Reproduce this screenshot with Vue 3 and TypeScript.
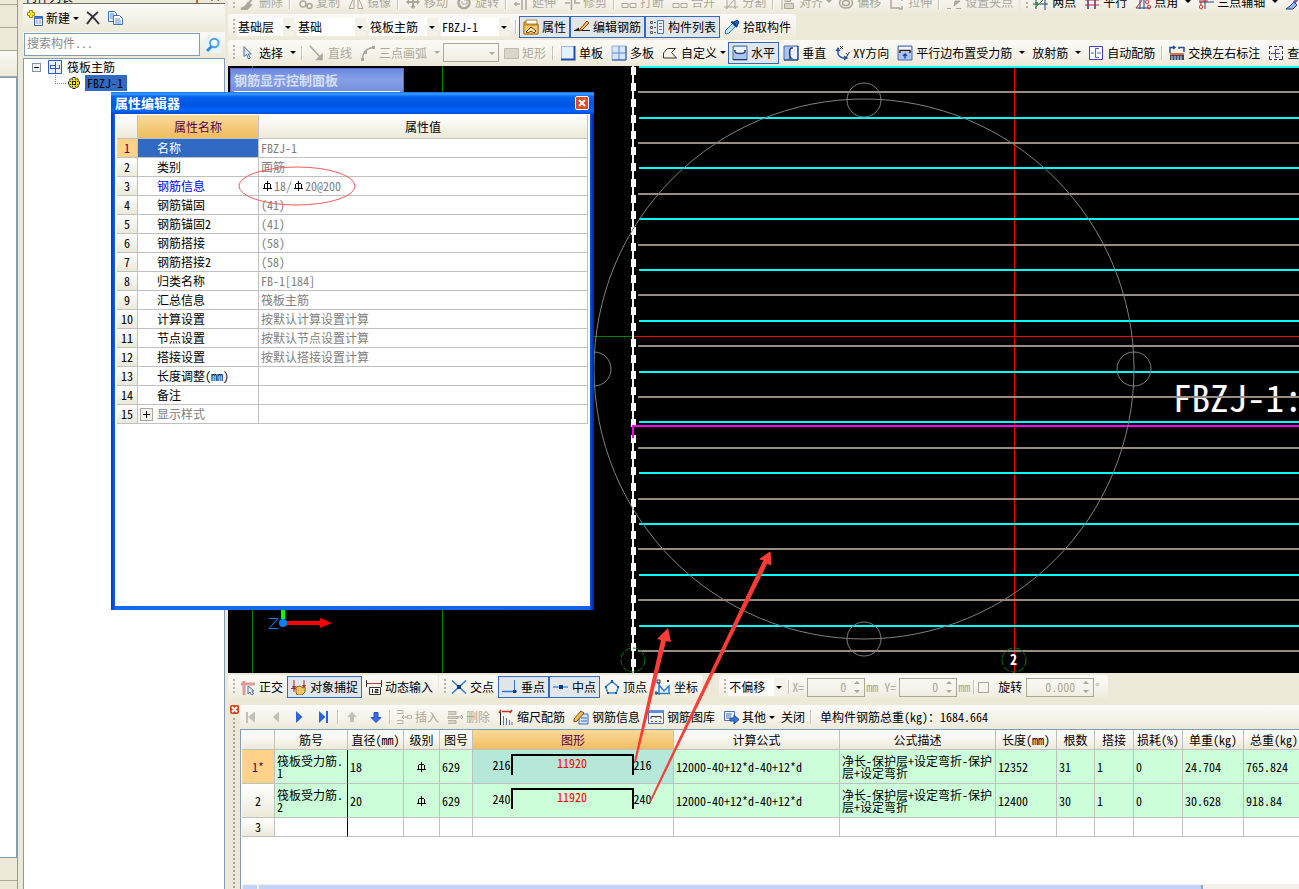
<script setup lang="ts">
import { h, ref } from 'vue'

type Shape = [d: string, fill?: string, stroke?: string, width?: number]
interface Tool {
  icon?: string
  label?: string
  title?: string
  drop?: 'near' | 'far'
  on?: boolean
  off?: boolean
  sep?: boolean
}

const G = '#aca899'
const B = '#2b56b8'
const icons: Record<string, Shape[]> = {
  newItem: [
    ['M2.5 0.5h3v2h2v3h-2v2h-3v-2h-2v-3h2z', '#ffe13a', '#a88a00'],
    ['M7.5 6.5h8v9h-8z', '#eef4ff', '#3a62b0'],
    ['M8 7h7v2h-7z', '#4a7ad0'],
    ['M9 11h2M12 11h2M9 13h2M12 13h2', 'none', '#6a8cd0'],
  ],
  cross: [['M2 2C5 4 10 9 14 14M13 2C9 5 5 9 2 14', 'none', '#33333b', 2]],
  copyDoc: [
    ['M1.5 1.5h6l2 2v8h-8z', '#e8f1ff', '#3f6fc0'],
    ['M3 4h4M3 6h4M3 8h4', 'none', '#5b8ad8'],
    ['M6.5 5.5h6l3 3v6h-9z', '#fff', '#3f6fc0'],
    ['M8 9h5M8 11h6M8 13h6', 'none', '#5b8ad8'],
  ],
  search: [
    ['M0 0h16v16H0z', '#e6f3fd'],
    ['M13.5 6a4.2 4.2 0 1 1-8.4 0a4.2 4.2 0 1 1 8.4 0z', '#f6fbff', '#4aa5e8', 2],
    ['M6.5 9.5L2 14', 'none', '#2f8fdc', 3],
  ],
  gridIcon: [
    ['M1.5 1.5h13v13h-13z', '#eaf1ff', '#2a5ac0', 1],
    ['M8.5 3v11M3.5 6v3.5M3 6.500h5M3 9.500h10M12.500 6v3.500', 'none', '#2a5ac0'],
  ],
  gear: [
    ['M8 2v12M2 8h12M4 4l8 8M12 4l-8 8', 'none', '#111', 3],
    ['M8 3v10M3 8h10M4.500 4.500l7 7M11.500 4.500l-7 7', 'none', '#ffe600', 2],
    ['M6 6h4v4H6z', '#222'],
    ['M7 7h2v2H7z', '#fff04a'],
  ],
  props: [
    ['M1 3h6l2 2h6v10H1z', '#e9a83c', '#a06a14'],
    ['M3 1h11v4H3z', '#fff', '#b08030'],
    ['M1 6h14v9H1z', '#f5c768', '#b87a1e'],
    ['M3 13l5-5 5 4-2 2-3-2-3 2z', '#fbeccb', '#5a4210'],
  ],
  editBar: [
    ['M0 11.500h16', 'none', '#222'],
    ['M0 11.500L5 8.500v3', '#222'],
    ['M6 10l7-8 2 2-7 7-3 1z', '#f2c23c', '#8a3c18'],
  ],
  list: [
    ['M1.500 2.500h2v2h-2zM1.500 7.500h2v2h-2zM1.500 12.500h2v2h-2z', 'none', '#556', 1],
    ['M5 3.500h2M5 8.500h2M5 13.500h2', 'none', '#556'],
    ['M8.500 1.500h6v13h-6z', '#eaf2ff', '#4573b8'],
    ['M10 4.500h3M10 7.500h3M10 10.500h3', 'none', '#4573b8'],
  ],
  picker: [
    ['M10 3l3-2 2 2-2 4-2-1-4-3z', '#1d62c8', '#0c3d8a'],
    ['M9 4l3 3-7 7-3 1-1-1 1-3z', '#bfe4fb', '#2c6fb0'],
    ['M8 3l5 5', 'none', '#0c3d8a', 2],
  ],
  pointer: [['M4 1.500v10l2.500-2 2 4.500 1.800-1-2-4h3z', '#dfe8f4', '#53749c']],
  line: [['M1 1l11 12M13 14.500h-5l5-5z', G, G, 1.5]],
  arc: [['M2 15C3 7 7 3 13 2.500', 'none', G, 1.5], ['M1 13h3v3H1zM12 1h3v3h-3zM4 6h3v3H4z', G]],
  rect: [['M1.500 3.500h14v10h-14z', '#d9d5c8', '#c0bcae']],
  single: [['M1.500 1.500h13v13h-13z', '#e6effc', '#9ab8e6'], ['M14.500 1v13.500H1', 'none', '#1f4fa8', 2]],
  multi: [['M1 1h14v14H1z', '#d7e5fb', '#8fb0e0'], ['M8 1v14M1 8h14', 'none', '#5f88c8', 1], ['M15 1v14H1', 'none', '#1f4fa8']],
  poly: [['M5.500 3.500h8l-4 4 5 5.500H1.500v-5z', 'none', '#333']],
  horiz: [['M1 1h14v14H1z', '#a9c4ee', '#4a6fae'], ['M2 2h12v6H2z', '#eaf3ff'], ['M3 5v2c1 2 9 2 10 0v-2', 'none', '#26406f', 1.500], ['M1 14.500h14', 'none', '#1d3c78']],
  vert: [['M1 1h14v14H1z', '#a9c4ee', '#4a6fae'], ['M8 2h6v12H8z', '#eaf3ff'], ['M10 3H8.500c-3 1-2 9-0.500 10l-2 0', 'none', '#26406f', 1.500], ['M15 1v14H1', 'none', '#1d3c78']],
  xy: [['M4 3v5c0 3 2 4 5 5h4', 'none', B, 1.500], ['M1.500 6L4 2l2.500 4zM10 10.500l4.500 2.500-4.500 2.500z', B], ['M6 1l3 3M9 1L6 4M12 8l1.500 2M15.500 7l-3 5', 'none', '#333']],
  edge: [['M1 1h14v14H1z', '#a9c4ee', '#4a6fae'], ['M2 2h12v5H2z', '#f2f7ff'], ['M3 8V5.500h10V8', 'none', '#222', 1.500], ['M8 13.500V9M6 11l2-2 2 2', 'none', '#2a3fb0', 1.500]],
  auto: [['M1.500 1.500h13v13h-13z', '#fff', '#4040c0', 1], ['M11 3.500H7.500v9H11M3 8h3M9 8h4', 'none', '#4466d0']],
  swap: [['M1 8V2.500h4M4 1l2 1.500L4 4M10 4V2.500h5M15 2v5', 'none', '#234f9a', 1.500], ['M1 9h14v6H1z', '#3a4a6a'], ['M1 8h14v2H1z', '#e0703a'], ['M3 11v4M6 11v4M9 11v4M12 11v4', 'none', '#dfe6f4']],
  view: [['M1.500 1.500h13v13h-13z', 'none', '#335', 1], ['M4 1.500h2M9 1.500h2M4 14.500h2M9 14.500h2M1.500 4v2M1.500 9v2M14.500 4v2M14.500 9v2', 'none', '#fff', 2], ['M11 4.500H7.500v8h3M3 8.500h9', 'none', '#3a56b0']],
  brush: [['M13 4l-5 6M8 9l3 2-4 4H1l4-2z', G, G, 2]],
  circles: [['M9 10a3 3 0 1 1-6 0a3 3 0 1 1 6 0zM15 12a2.500 2.500 0 1 1-5 0a2.500 2.500 0 1 1 5 0z', 'none', G, 1.500]],
  mirror: [['M6 3v11.500H1zM10 3v11.500h5z', 'none', G]],
  move: [['M8 2v12M2 8h12', 'none', G, 2], ['M5 4l3-3 3 3zM5 12l3 3 3-3zM4 5L1 8l3 3zM12 5l3 3-3 3z', G]],
  rotate: [['M12 5a5.500 5.500 0 1 1-8 0', 'none', G, 2.500], ['M8 6h3v4H6V7', 'none', G]],
  extend: [['M1 10h6M9 4v12M13 4v12M3 8v4', 'none', G, 1.500]],
  trim: [['M1 9h5M10 9h6M7.500 4v12M11 4v4', 'none', G, 1.500]],
  split: [['M1 9.500h6v4H1zM9 9.500h6v4H9z', 'none', G]],
  cut: [['M1 4h14M1 13h14M3 15L13 4M4 4v11M12 5v10', 'none', G]],
  align: [['M2 1v14.500M4.500 9.500h9v5h-9zM4.500 4.500h6v3h-6', '#d8d4c6', G]],
  offset: [['M14.500 9a6.500 5 0 1 1-13 0a6.500 5 0 1 1 13 0zM11.500 9a3.500 2.500 0 1 1-7 0a3.500 2.500 0 1 1 7 0z', 'none', G, 1.500]],
  stretch: [['M2 4v10h9M13 12v3h-3M4 5h2M8 5h2M13 5v2', 'none', G, 1.500]],
  grip: [['M1 14.500h4M10 14.500h5M9 7h5l-6 5z', G, G]],
  axis2: [['M3 1v14M12 4v12M0 10h15M2 14L12 4', 'none', '#26418c', 1], ['M2 14L12 4', 'none', '#2e9a40'], ['M2 8h3v3H2z', '#2e9a40']],
  axisP: [['M4 2v13M11 2v13', 'none', '#26418c', 1.500], ['M1 6h14M1 11h14', 'none', '#d02020']],
  axisA: [['M1 14h14M5 4v11M9 4v11', 'none', '#26418c'], ['M1 14L8 5M12 6a1.500 2 0 1 0 .1 0M14 11a1.500 2 0 1 0 .1 0', 'none', '#d02020']],
  axis3: [['M7 1v14M1 8h15', 'none', '#26418c'], ['M1 7h9M3 8v3', 'none', '#d02020'], ['M3 11a1.500 2 0 1 0 .1 0', 'none', '#d02020']],
  paint: [['M14 3l-5 6', 'none', '#8a50c0', 3], ['M9 8l3 3-4 4H1l4-3z', '#9ab6e8', '#26418c']],
  ortho: [['M4 2v14M1 5h14', 'none', '#dd9a9a', 3], ['M8 7v8l2-2 1.500 3 2-1-1.500-3h2z', '#e4ebf5', '#53749c']],
  snap: [['M3 1v12M13 1v9M0 9.500h5', 'none', '#a03030'], ['M1 7h4l-2 4zM11 6h4l-2 4z', '#a03030'], ['M5 8l4-1 3 2 2-1v5l-3 3H6l-1-3z', '#f0c460', '#8a6418']],
  dyn: [['M0.500 1v7M15.500 1v7', 'none', '#333'], ['M1 4.500h14', 'none', '#b04040'], ['M3.500 8.500h11v7h-11z', '#f7f5ee', '#333'], ['M6.500 10v4M9 10.500h3v1.500h-3v1.500h3.500', 'none', '#222']],
  cp: [['M1 1.500l14 13M15 1.500l-14 13', 'none', '#2a7ad0', 1.500], ['M6 6h4v4H6z', '#123a80']],
  pp: [['M0 12.500h15', 'none', '#2a7ad0', 1.500], ['M12.500 1v12', 'none', '#2a7ad0'], ['M11 11h3v3h-3z', '#123a80']],
  mp: [['M0 8h15', 'none', '#4a90d8', 1.500], ['M6 6h4v4H6z', '#123a80']],
  top: [['M8 2.500L14.500 8l-2.500 6H4L1.500 8z', 'none', '#3a84c8', 1.500], ['M7 1h2v3H7zM1 7h2v2H1zM13 7h2v2h-2zM3 13h2v2H3zM11 13h2v2h-2z', '#1f5aa8']],
  coord: [['M4 3v13M1 14.500h14M4 6l5 6 5-5v8', 'none', '#2a7ad0', 1.500], ['M2 1h3v3H2zM12 1l2 2M14 1l-2 2M0 13h2v2H0z', 'none', '#333']],
  first: [['M3 3v11', 'none', '#c2bfb4', 2], ['M11 2.500v11L4 8z', '#c2bfb4']],
  prev: [['M11 2.500v11L5 8z', '#c2bfb4']],
  next: [['M4 2v12L10.500 8z', '#2a62e0']],
  last: [['M3 2v12L9.500 8z', '#2a62e0'], ['M11 2v12', 'none', '#2a62e0', 2]],
  up: [['M8 3l5 5h-3v5H6V8H3z', '#c2bfb4']],
  down: [['M8 13.500l5-5h-3v-5H6v5H3z', '#3a6ae8', '#2450c0']],
  insert: [['M1 1.500h6v3H1M1 11.500h6v3H1M11.500 6.500h4v3h-4z', 'none', '#b8b4a6'], ['M11 8H6M8 6L6 8l2 2', 'none', G]],
  remove: [['M1 2.500h8v3H1M1 11.500h8v3H1M1 7.500h10v2H1z', '#d5d1c4', '#b8b4a6'], ['M10 8h6M14 6l2 2-2 2', 'none', G]],
  scale: [['M2.500 3v13', 'none', '#222', 1], ['M5.500 7v9M8.500 9v7M11.500 11v5M14 13v3', 'none', '#5577a8'], ['M4 2.500h9M3 1l-2 3M14 1l-2 3', 'none', '#c03020', 1.500]],
  info: [['M6 5h9v10H6z', '#d5e4fb', '#3f6fc0'], ['M1 10l7-8 3 2-7 8-3 1z', '#f0bf50', '#7a4a10'], ['M8 9h6M8 12h6', 'none', '#3f6fc0']],
  lib: [['M0.500 1.500h15v13H0.500z', '#f2f6fd', '#4a6fae'], ['M0 1h16v3H0z', '#5f8fd8'], ['M3 10V7.500h10V10M8 7v2', 'none', '#444'], ['M3 12.500h2M11 12.500h2', 'none', '#c03020'], ['M7 12.500h2', 'none', '#30a040']],
  other: [['M1.500 2.500h10v9h-10z', '#eef4ff', '#4a6fae'], ['M3 5h6M3 7h5M3 9h4', 'none', '#4a6fae'], ['M7 9h4V6l5 4.500-5 4.500v-3H7z', '#3a72d8', '#1f4fa8']],
}

const Ico = (p: { n: string }) =>
  h('svg', { class: 'ico', width: 16, height: 16, viewBox: '0 0 16 16', 'aria-hidden': 'true' },
    (icons[p.n] ?? []).map(([d, fill, stroke, w]) =>
      h('path', { d, fill: fill ?? 'none', stroke: stroke ?? 'none', 'stroke-width': w ?? 1 })))
Ico.props = ['n']

const ToolItems = (p: { items: Tool[] }) =>
  p.items.map((t) =>
    t.sep
      ? h('span', { class: 'sep' })
      : h('button', { type: 'button', class: ['tool', { on: t.on, off: t.off, drop: t.drop }], disabled: t.off, title: t.title }, [
          t.icon ? h(Ico, { n: t.icon }) : null,
          t.label ? h('span', t.label) : null,
          t.drop ? h('i', { class: ['tri', t.drop] }) : null,
        ]))
ToolItems.props = ['items']

const Rebar = () =>
  h('svg', { class: 'rebar', width: 11, height: 12, viewBox: '0 0 11 12', role: 'img', 'aria-label': 'HRB400' }, [
    h('path', { d: 'M5.5 1v10M3 3.5h5M2.5 4v4M8.5 4v4M1 8.5h9', fill: 'none', stroke: 'currentColor', 'stroke-width': 1, 'shape-rendering': 'crispEdges' }),
  ])

const sep: Tool = { sep: true }
const editTools: Tool[] = [
  { icon: 'brush', label: '删除', off: true }, sep,
  { icon: 'circles', label: '复制', off: true }, { icon: 'mirror', label: '镜像', off: true }, sep,
  { icon: 'move', label: '移动', off: true }, { icon: 'rotate', label: '旋转', off: true }, sep,
  { icon: 'extend', label: '延伸', off: true }, { icon: 'trim', label: '修剪', off: true }, sep,
  { icon: 'split', label: '打断', off: true }, { icon: 'split', label: '合并', off: true },
  { icon: 'cut', label: '分割', off: true }, sep,
  { icon: 'align', label: '对齐', off: true, drop: 'near' }, { icon: 'offset', label: '偏移', off: true },
  { icon: 'stretch', label: '拉伸', off: true }, sep,
  { icon: 'grip', label: '设置夹点', off: true },
]
const axisTools: Tool[] = [
  { icon: 'axis2', label: '两点' }, { icon: 'axisP', label: '平行' },
  { icon: 'axisA', label: '点角', drop: 'far' }, { icon: 'axis3', label: '三点辅轴', drop: 'far' },
  { icon: 'paint', title: '修剪轴线' },
]
const viewTools: Tool[] = [
  { icon: 'props', label: '属性', on: true }, { icon: 'editBar', label: '编辑钢筋', on: true },
  { icon: 'list', label: '构件列表', on: true }, { icon: 'picker', label: '拾取构件' },
]
const drawA: Tool[] = [
  { icon: 'pointer', label: '选择', drop: 'far' }, sep,
  { icon: 'line', label: '直线', off: true }, { icon: 'arc', label: '三点画弧', off: true, drop: 'far' },
]
const drawB: Tool[] = [
  { icon: 'rect', label: '矩形', off: true }, sep,
  { icon: 'single', label: '单板' }, { icon: 'multi', label: '多板' },
  { icon: 'poly', label: '自定义', drop: 'near' }, { icon: 'horiz', label: '水平', on: true },
  { icon: 'vert', label: '垂直' }, { icon: 'xy', label: 'XY方向' },
  { icon: 'edge', label: '平行边布置受力筋', drop: 'far' }, { label: '放射筋', drop: 'far' },
  { icon: 'auto', label: '自动配筋' }, sep,
  { icon: 'swap', label: '交换左右标注' }, { icon: 'view', label: '查看布筋' },
]
const snapA: Tool[] = [
  { icon: 'ortho', label: '正交' }, { icon: 'snap', label: '对象捕捉', on: true }, { icon: 'dyn', label: '动态输入' },
]
const snapB: Tool[] = [
  { icon: 'cp', label: '交点' }, { icon: 'pp', label: '垂点', on: true }, { icon: 'mp', label: '中点', on: true },
  { icon: 'top', label: '顶点' }, { icon: 'coord', label: '坐标' },
]
const barTools: Tool[] = [
  { icon: 'first', off: true, title: '首条' }, { icon: 'prev', off: true, title: '上一条' },
  { icon: 'next', title: '下一条' }, { icon: 'last', title: '末条' }, sep,
  { icon: 'up', off: true, title: '上移' }, { icon: 'down', title: '下移' }, sep,
  { icon: 'insert', label: '插入', off: true }, { icon: 'remove', label: '删除', off: true },
  { icon: 'scale', label: '缩尺配筋' }, { icon: 'info', label: '钢筋信息' }, { icon: 'lib', label: '钢筋图库' },
  { icon: 'other', label: '其他', drop: 'near' }, { label: '关闭' }, sep,
]
const combos = [
  { name: '楼层', value: '基础层', w: 'narrow' },
  { name: '构件类别', value: '基础', w: '' },
  { name: '构件类型', value: '筏板主筋', w: '' },
  { name: '构件', value: 'FBZJ-1', w: '' },
]

const props = [
  ['名称', 'FBZJ-1'], ['类别', '面筋'], ['钢筋信息', ''], ['钢筋锚固', '(41)'], ['钢筋锚固2', '(41)'],
  ['钢筋搭接', '(58)'], ['钢筋搭接2', '(58)'], ['归类名称', 'FB-1[184]'], ['汇总信息', '筏板主筋'],
  ['计算设置', '按默认计算设置计算'], ['节点设置', '按默认节点设置计算'], ['搭接设置', '按默认搭接设置计算'],
  ['长度调整(mm)', ''], ['备注', ''], ['显示样式', ''],
]

const cols = ['', '筋号', '直径(mm)', '级别', '图号', '图形', '计算公式', '公式描述', '长度(mm)', '根数', '搭接', '损耗(%)', '单重(kg)', '总重(kg)']
const widths = [33, 73, 56, 36, 33, 201, 166, 156, 61, 38, 39, 49, 61, 61]
const formulaNote = '净长-保护层+设定弯折-保护\n层+设定弯折'
const bars = [
  { no: '1*', name: '筏板受力筋.\n1', dia: 18, fig: 629, hook: 216, len: 11920, total: 12352, n: 31, unit: '24.704', sum: '765.824' },
  { no: '2', name: '筏板受力筋.\n2', dia: 20, fig: 629, hook: 240, len: 11920, total: 12400, n: 30, unit: '30.628', sum: '918.84' },
]

const cyan = [66, 117, 167, 218, 269, 320, 371, 421, 472, 523, 574, 625]
const tan = [91, 142, 193, 244, 294, 345, 396, 447, 498, 548, 599, 650]
const dashes = Array.from({ length: 38 }, (_, i) => 67 + i * 16)
const knobs = [[864, 100], [1134, 369], [864, 639], [594, 369]]
const rotate = ref(false)
</script>

<template>
  <div class="app">
    <div class="edge-strip">
      <div class="e1"></div><div class="e2"></div><div class="e3"></div><div class="e4"></div><div class="e5"></div><div class="e6"></div>
    </div>

    <aside class="side">
      <header class="side-title"><span>构件列表</span><span class="side-pin">中 ×</span></header>
      <div class="side-tools">
        <button type="button" class="tool"><Ico n="newItem" /><span>新建</span><i class="tri near"></i></button>
        <button type="button" class="tool" title="删除"><Ico n="cross" /></button>
        <button type="button" class="tool" title="复制"><Ico n="copyDoc" /></button>
      </div>
      <div class="search">
        <input type="text" placeholder="搜索构件..." aria-label="搜索构件" />
        <button type="button" title="搜索"><Ico n="search" /></button>
      </div>
      <div class="tree">
        <div class="node"><button type="button" class="fold" aria-label="折叠"></button><Ico n="gridIcon" /><span>筏板主筋</span></div>
        <div class="node leaf"><i class="twig"></i><Ico n="gear" /><span class="picked">FBZJ-1</span></div>
      </div>
    </aside>

    <main class="main">
      <div class="clip-row">
        <div class="bar"><i class="grip"></i><ToolItems :items="editTools" /></div>
        <div class="bar grow"><i class="grip"></i><ToolItems :items="axisTools" /></div>
      </div>
      <div class="bar-row">
        <div class="bar">
          <i class="grip"></i>
          <span v-for="c in combos" :key="c.name" class="combo" :class="c.w">
            <select :aria-label="c.name"><option>{{ c.value }}</option></select><i class="tri"></i>
          </span>
          <span class="sep"></span>
          <ToolItems :items="viewTools" />
        </div>
      </div>
      <div class="bar-row">
        <div class="bar grow">
          <i class="grip"></i>
          <ToolItems :items="drawA" />
          <span class="combo disabled"><select disabled aria-label="画弧方式"><option></option></select><i class="tri"></i></span>
          <ToolItems :items="drawB" />
        </div>
      </div>

      <section class="canvas">
        <svg class="drawing" aria-label="钢筋平面图">
          <g transform="translate(-228 -66)">
            <text x="1173" y="412" class="mark">FBZJ-1:</text>
            <g shape-rendering="crispEdges">
              <path d="M252.5 66V673M442.500 66V673" stroke="#008000" />
              <path d="M594 336.500H632" stroke="#008000" />
              <path d="M633 336.500H1600M1014.500 66V673" stroke="#f00" />
              <rect v-for="y in tan" :key="y" x="638" :y="y" width="1000" height="2" fill="#998c82" />
              <rect v-for="y in cyan" :key="y" x="639" :y="y" width="1000" height="2" fill="#0ff" />
              <rect x="632" y="66" width="2" height="607" fill="#fff" />
              <rect v-for="y in dashes" :key="y" x="631" :y="y" width="5" height="8" fill="#fff" />
              <path d="M1600 426H633V438" fill="none" stroke="#f0f" stroke-width="2" />
            </g>
            <g fill="none" stroke="#808080">
              <circle cx="864" cy="369" r="270" />
              <circle v-for="[x, y] in knobs" :key="`${x}-${y}`" :cx="x" :cy="y" r="17" />
            </g>
            <g fill="none" stroke="#008000" stroke-dasharray="6 2">
              <circle cx="633" cy="660" r="12" /><circle cx="1014" cy="660" r="12" />
            </g>
            <text x="1010" y="665" class="axis-no">2</text>
            <rect x="281" y="606" width="4" height="13" fill="#0f0" />
            <path d="M286 621H320V618L332 623L320 628V625H286Z" fill="#f00" />
            <path d="M269 618.500H278L269 628.500H278" fill="none" stroke="#0080ff" />
            <circle cx="283" cy="623" r="4" fill="#0080ff" />
          </g>
        </svg>
        <div class="ghost"><span>钢筋显示控制面板</span><i></i></div>
      </section>

      <div class="snap-row">
        <div class="bar"><i class="grip"></i><ToolItems :items="snapA" /></div>
        <div class="bar"><i class="grip"></i><ToolItems :items="snapB" /></div>
        <div class="bar last">
          <i class="grip"></i>
          <span class="combo narrow"><select aria-label="偏移方式"><option>不偏移</option></select><i class="tri"></i></span>
          <span class="sep"></span>
          <label class="spin">X=<span><input type="text" value="0" disabled /><i></i></span>mm</label>
          <label class="spin">Y=<span><input type="text" value="0" disabled /><i></i></span>mm</label>
          <span class="sep"></span>
          <label class="turn"><input v-model="rotate" type="checkbox" />旋转</label>
          <label class="spin wide"><span><input type="text" value="0.000" disabled aria-label="旋转角度" /><i></i></span>°</label>
        </div>
      </div>

      <section class="dock">
        <div class="dock-edge"><button type="button" aria-label="关闭"><svg width="9" height="9" viewBox="0 0 9 9"><path d="M2 2l5 5M7 2l-5 5" stroke="#fff" stroke-width="2" /></svg></button><i></i></div>
        <div class="dock-body">
          <div class="bar dock-tools"><ToolItems :items="barTools" /><span class="total">单构件钢筋总重(kg)：1684.664</span></div>
          <div class="sheet">
            <table class="bars">
              <colgroup><col v-for="(w, i) in widths" :key="i" :class="`w${w}`" /></colgroup>
              <thead><tr><th v-for="c in cols" :key="c" :class="{ hot: c === '图形' }">{{ c }}</th></tr></thead>
              <tbody>
                <tr v-for="(b, i) in bars" :key="b.no" class="data">
                  <th scope="row" :class="{ hot: i === 0 }">{{ b.no }}</th>
                  <td class="pin wrap">{{ b.name }}</td>
                  <td>{{ b.dia }}</td>
                  <td class="mid"><Rebar /></td>
                  <td>{{ b.fig }}</td>
                  <td :class="{ focus: i === 0 }"><div class="shape"><span>{{ b.hook }}</span><b>{{ b.len }}</b><span>{{ b.hook }}</span></div></td>
                  <td>12000-40+12*d-40+12*d</td>
                  <td class="wrap">{{ formulaNote }}</td>
                  <td>{{ b.total }}</td>
                  <td>{{ b.n }}</td>
                  <td>1</td>
                  <td>0</td>
                  <td>{{ b.unit }}</td>
                  <td>{{ b.sum }}</td>
                </tr>
                <tr class="blank"><th scope="row">3</th><td v-for="n in 13" :key="n" :class="{ pin: n === 1 }"></td></tr>
              </tbody>
            </table>
          </div>
          <div class="scroll"><button type="button" aria-label="向左滚动"></button><i></i></div>
        </div>
      </section>
    </main>

    <section class="dialog" role="dialog" aria-label="属性编辑器">
      <header><span>属性编辑器</span><button type="button" aria-label="关闭"><svg width="12" height="12" viewBox="0 0 12 12"><path d="M3 3l6 6M9 3l-6 6" stroke="#fff" stroke-width="2" /></svg></button></header>
      <div class="dialog-body">
        <table class="props">
          <thead><tr><th class="num"></th><th class="hot name">属性名称</th><th>属性值</th></tr></thead>
          <tbody>
            <tr v-for="([k, v], i) in props" :key="k">
              <th scope="row" :class="{ hot: i === 0 }">{{ i + 1 }}</th>
              <td class="key" :class="{ sel: i === 0, blue: i === 2, dim: i === 14 }"><button v-if="i === 14" type="button" class="plus" aria-label="展开"></button>{{ k }}</td>
              <td class="val">
                <span v-if="i === 2" class="spec"><Rebar />18/<Rebar />20@200</span>
                <template v-else>{{ v }}</template>
              </td>
            </tr>
          </tbody>
        </table>
      </div>
    </section>

    <svg class="notes" aria-hidden="true">
      <ellipse cx="297" cy="186" rx="58" ry="19" fill="none" stroke="#f65a5a" />
      <path d="M634 762L661 640L657 639L668 628L671 642L666 641L636 762Z" fill="#fa3c36" />
      <path d="M650 801L764 560L760 559L770 552L771 565L767 563L651 801Z" fill="#fa3c36" stroke="#fa3c36" />
    </svg>
  </div>
</template>

<style>
html, body { height: 100%; overflow: hidden; }
#app { height: 100%; }
button, input, select { font: inherit; color: inherit; margin: 0; }
.ico { display: block; flex: none; }
.rebar { flex: none; color: #000; }
.tool {
  display: flex; align-items: center; gap: 3px; flex: none; height: 22px; padding: 0 3px;
  border: 1px solid transparent; background: none; white-space: nowrap; line-height: 16px;
}
.tool.on { border-color: #316ac5; background: #e1e6e8; }
.tool.off { color: #aca899; }
.tool.drop { padding-right: 1px; }
.grip + .tool { margin-left: -1px; }
.sep { flex: none; width: 1px; height: 14px; margin: 0 2px; background: #c5c2b2; border-right: 1px solid #fff; }
.tri { flex: none; width: 0; height: 0; border: 3px solid transparent; border-top-color: currentColor; border-bottom-width: 0; }
.tri.far { margin: 0 1px 0 4px; }
</style>

<style scoped>
.app {
  position: relative; display: flex; height: 100vh; min-height: 600px; overflow: hidden; background: #ece9d8; color: #000;
  font: 12px/14px "Noto Sans Mono CJK SC", "Noto Sans CJK SC", "Liberation Mono", monospace;
  font-variant-ligatures: none; font-feature-settings: "ccmp" 0, "liga" 0, "dlig" 0;
}

.edge-strip { flex: none; display: flex; flex-direction: column; width: 17px; margin-right: 5px; border-right: 1px solid #9c9a8c; }
.edge-strip div { flex: none; border-bottom: 1px solid #aca899; }
.e1 { height: 4px; }
.e2, .e3 { height: 22px; }
.e4 { height: 25px; background: linear-gradient(#faf9f5, #ece9d8); }
.edge-strip .e5 { flex: 1; background: #fff; border: 1px solid #7f9db9; border-left: 0; }
.e6 { height: 22px; margin-bottom: 8px; }

.side { flex: none; display: flex; flex-direction: column; width: 202px; margin-right: 3px; }
.side-title { display: flex; align-items: flex-end; justify-content: space-between; height: 3px; padding: 0 4px 0 2px; overflow: hidden; border-bottom: 1px solid #716f64; }
.side-title span { line-height: 13px; }
.side-tools { display: flex; align-items: center; height: 26px; padding: 1px 1px; background: linear-gradient(#fbfaf7, #ece9d8); }
.side-tools .tool { padding: 0 2px; }
.search { display: flex; align-items: center; height: 25px; margin-bottom: 1px; background: linear-gradient(#faf9f5, #ece9d8); }
.search input { width: 176px; height: 23px; margin-left: 1px; box-sizing: border-box; padding: 0 2px 4px; border: 1px solid #7f9db9; background: #fff; outline: 0; }
.search input::placeholder { color: #8a8a8a; opacity: 1; }
.search button { margin-left: 5px; padding: 0; border: 0; background: none; }
.tree { flex: 1; background: #fff; border: 1px solid #7f9db9; border-bottom: 0; }
.node { display: flex; align-items: center; height: 16px; padding-left: 8px; }
.fold { width: 9px; height: 9px; padding: 0; margin-right: 6px; border: 1px solid #7f93ad; background: linear-gradient(#000, #000) center / 5px 1px no-repeat #f4f2ea; }
.node span { margin-left: 4px; }
.leaf { padding-left: 31px; }
.twig { width: 10px; height: 8px; margin-bottom: 8px; border: 1px dotted #808080; border-width: 0 0 1px 1px; }
.node .picked { margin-left: 3px; padding: 1px 4px 1px 2px; background: #316ac5; }

.main { flex: 1; min-width: 0; display: flex; flex-direction: column; }
.clip-row { flex: none; display: flex; align-items: flex-end; gap: 3px; height: 14px; overflow: hidden; }
.bar-row, .snap-row { flex: none; display: flex; overflow: hidden; }
.bar-row { height: 26px; }
.bar { flex: none; display: flex; align-items: center; height: 25px; padding: 0 1px 0 5px; background: linear-gradient(#fbfaf7, #f4f2e9 60%, #ece9d8); border-radius: 3px; }
.bar.grow { flex: 1; min-width: 0; overflow: hidden; }
.grip { flex: none; width: 2px; height: 16px; margin-right: 2px; background: repeating-linear-gradient(#b8b5a4 0 2px, transparent 2px 4px); }
.combo { position: relative; flex: none; display: flex; width: 69px; height: 18px; margin-right: 3px; background: #fff; }
.combo.narrow { width: 57px; }
.combo select { width: 100%; padding: 0 14px 0 1px; border: 0; appearance: none; background: linear-gradient(#f3f1e8, #f3f1e8) right / 11px 100% no-repeat #fff; line-height: 16px; }
.combo .tri { position: absolute; right: 3px; top: 8px; }
.combo.disabled { width: 54px; height: 17px; margin: 0; border: 1px solid #aca899; background: none; color: #aca899; }
.combo.disabled select { background: none; }

.canvas { position: relative; flex: 1; min-height: 0; background: #000; overflow: hidden; }
.drawing { display: block; width: 100%; height: 100%; }
.axis-no { fill: #fff; font-size: 14px; font-weight: bold; }
.mark { fill: #fff; font-size: 37px; font-weight: 300; }
.ghost { position: absolute; left: 2px; top: 2px; width: 172px; height: 26px; border: 1px solid #5a6fd0; background: linear-gradient(#6685dd, #86a0e6 40%, #7088dc); background-origin: border-box; }
.ghost span { display: block; padding: 3px; font-size: 13px; line-height: 16px; font-weight: bold; color: #d3def7; }
.ghost i { display: block; height: 2px; margin: 0 3px; background: #fff; }

.snap-row { height: 32px; align-items: center; }
.snap-row .bar { margin-top: -4px; margin-right: 1px; }
.snap-row .last { margin-left: 15px; padding-right: 8px; }
.last .combo { margin-right: 1px; }
.spin { display: flex; align-items: center; gap: 3px; margin-right: 1px; color: #aca899; }
.spin + .spin { margin-left: 5px; }
.spin span { display: flex; align-items: center; width: 56px; height: 17px; border: 1px solid #aca899; margin-right: -2px; }
.spin.wide span { width: 66px; }
.spin.wide { margin: 0 0 0 4px; }
.spin input { flex: 1; min-width: 0; width: 10px; padding: 0 8px 0 0; border: 0; background: none; text-align: right; color: #aca899; }
.spin i { position: relative; width: 0; height: 0; margin: 9px 4px 0 0; border: 3px solid transparent; border-top-color: #aca899; border-bottom-width: 0; }
.spin i::before { content: ''; position: absolute; left: -3px; top: -12px; border: 3px solid transparent; border-bottom-color: #aca899; border-top-width: 0; }
.turn { display: flex; align-items: center; gap: 9px; }
.turn input { appearance: none; width: 11px; height: 11px; border: 1px solid #aca899; box-sizing: border-box; margin-left: 1px; }

.dock { flex: none; display: flex; height: 184px; }
.dock-edge { flex: none; width: 12px; display: flex; flex-direction: column; align-items: center; }
.dock-edge button { width: 9px; height: 9px; padding: 0; border: 0; border-radius: 2px; background: #d8401c; line-height: 0; }
.dock-edge i { flex: 1; width: 2px; margin-top: 4px; background: repeating-linear-gradient(#a8a594 0 2px, transparent 2px 4px); }
.dock-body { flex: 1; min-width: 0; display: flex; flex-direction: column; }
.dock-tools { height: 24px; padding: 0; overflow: hidden; border-radius: 0; }
.dock-tools :deep(.sep) { margin: 0 1px; }
.total { margin-left: 7px; white-space: nowrap; }
.sheet { flex: 1; min-height: 0; overflow: hidden; padding-left: 1px; background: #fff; border: 1px solid #7f9db9; border-width: 1px 0 0 1px; }
.bars { table-layout: fixed; width: 1063px; border-collapse: separate; border-spacing: 0; }
.bars th, .bars td { height: 33px; padding: 0; border: 1px solid #c0c0c0; border-width: 0 1px 1px 0; font-weight: normal; white-space: nowrap; text-align: left; line-height: 12px; }
.bars td { padding-left: 2px; }
.bars th { text-align: center; background: linear-gradient(#fff, #f7f5ee 50%, #ece9d8); }
.bars thead th { height: 19px; }
.bars .blank th, .bars .blank td { height: 18px; }
.bars .data td { background: #ccffd9; }
.bars .data td.focus { background: #b5e8d8; }
.bars thead .hot, .props thead .hot { background: linear-gradient(#fbd99a, #f0bd60); color: #5a0050; }
.bars tbody th.hot, .props tbody th.hot { background: #ffd28a; color: #5a0050; }
.bars .pin { border-right-color: #000; }
.bars td.wrap { white-space: pre; }
.bars td.mid { padding: 0; text-align: center; }
.bars td.mid .rebar { vertical-align: middle; }
.shape { display: flex; justify-content: center; align-items: flex-start; height: 26px; padding-right: 4px; }
.shape span { padding-top: 5px; }
.shape b { width: 119px; height: 19px; border: 2px solid #000; border-bottom: 0; text-align: center; font-weight: normal; line-height: 14px; color: #f00; }
.w33 { width: 33px; } .w73 { width: 73px; } .w56 { width: 56px; } .w36 { width: 36px; } .w201 { width: 201px; }
.w166 { width: 166px; } .w156 { width: 156px; } .w61 { width: 61px; } .w38 { width: 38px; } .w39 { width: 39px; } .w49 { width: 49px; }
.scroll { flex: none; display: flex; gap: 2px; height: 4px; padding: 1px 96px 0 2px; background: #f3f1ec; border-left: 1px solid #7f9db9; }
.scroll button { width: 14px; padding: 0; border: 0; background: #c3d3fd; }
.scroll i { flex: 1; background: #c3d3fd; border-right: 2px solid #8ea8dc; }

.dialog { position: absolute; left: 111px; top: 92px; width: 475px; height: 514px; display: flex; flex-direction: column; padding: 0 4px 4px; background: linear-gradient(90deg, #0831d9, #166aee 1%, #1660e8 99%, #001ea0); }
.dialog header { flex: none; display: flex; align-items: center; justify-content: space-between; height: 22px; margin: 0 -4px; padding: 0 5px 0 4px; background: linear-gradient(#1a6ae8, #3b9bff 8%, #0562f0 22%, #0054e3 60%, #0066ff 85%, #0347c8); color: #fff; font-size: 13px; font-weight: bold; }
.dialog header button { display: flex; width: 14px; height: 14px; padding: 0; border: 1px solid #fff; border-radius: 2px; background: #e04a22; }
.dialog-body { flex: 1; padding: 1px 2px; background: #fff; }
.props { table-layout: fixed; width: 100%; border-collapse: separate; border-spacing: 0; }
.props th, .props td { height: 18px; padding: 0; border: 1px solid #c0c0c0; border-width: 0 1px 1px 0; font-weight: normal; line-height: 14px; white-space: nowrap; }
.props th { background: linear-gradient(#fff, #ece9d8); }
.props thead th { height: 23px; }
.props .num { width: 20px; }
.props .name { width: 120px; }
.props .key { position: relative; padding-left: 19px; }
.props .sel { background: #316ac5; color: #fff; }
.props .blue { color: #00f; }
.props .dim, .props .val { color: #808080; }
.props .val { padding-left: 2px; }
.spec { display: flex; align-items: center; }
.spec .rebar { margin: 0 1px; }
.plus {
  position: absolute; left: 2px; top: 3px; width: 13px; height: 13px; padding: 0; border: 1px solid #aaa;
  background: linear-gradient(#000, #000) center / 7px 1px no-repeat, linear-gradient(#000, #000) center / 1px 7px no-repeat #f4f2ea;
}
.notes { position: absolute; left: 0; top: 0; width: 100%; height: 100%; pointer-events: none; }
</style>
